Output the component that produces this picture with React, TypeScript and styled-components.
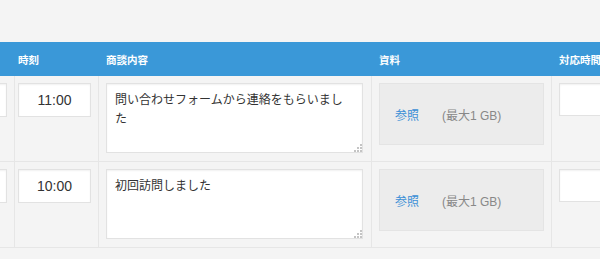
import React from "react";
import styled, { createGlobalStyle } from "styled-components";

const GlobalStyle = createGlobalStyle`
  html, body {
    margin: 0;
    padding: 0;
    background: #f4f4f4;
    overflow: hidden;
  }
  body {
    font-family: "Liberation Sans", "Noto Sans CJK JP", sans-serif;
  }
`;

// 列幅は全行で共通
const COLUMNS = "11px 88px 273px 180px 160px";

type Visit = {
  time: string;
  memo: string;
};

const visits: Visit[] = [
  { time: "11:00", memo: "問い合わせフォームから連絡をもらいました" },
  { time: "10:00", memo: "初回訪問しました" },
];

const App: React.FC = () => {
  return (
    <Page>
      <GlobalStyle />
      <Table>
        <HeaderRow>
          <HeaderCell />
          <HeaderCell>時刻</HeaderCell>
          <HeaderCell>商談内容</HeaderCell>
          <HeaderCell>資料</HeaderCell>
          <HeaderCell>対応時間</HeaderCell>
        </HeaderRow>
        {visits.map((v) => (
          <Row key={v.time}>
            <Cell $align="end">
              <TimeInput readOnly value="" />
            </Cell>
            <Cell>
              <TimeInput readOnly value={v.time} />
            </Cell>
            <Cell>
              <MemoWrap>
                <Memo readOnly value={v.memo} />
                <Grip width="9" height="9" viewBox="0 0 9 9">
                  <rect x="7" y="1" width="2" height="2" fill="#c4c4c4" />
                  <rect x="4" y="4" width="2" height="2" fill="#c4c4c4" />
                  <rect x="7" y="4" width="2" height="2" fill="#c4c4c4" />
                  <rect x="1" y="7" width="2" height="2" fill="#c4c4c4" />
                  <rect x="4" y="7" width="2" height="2" fill="#c4c4c4" />
                  <rect x="7" y="7" width="2" height="2" fill="#c4c4c4" />
                </Grip>
              </MemoWrap>
            </Cell>
            <Cell>
              <FileBox>
                <FileLink>参照</FileLink>
                <FileLimit>(最大1 GB)</FileLimit>
              </FileBox>
            </Cell>
            <Cell>
              <DurationInput readOnly value="" />
            </Cell>
          </Row>
        ))}
      </Table>
    </Page>
  );
};

export default App;

const Page = styled.div`
  padding-top: 42px;
  width: 600px;
  overflow: hidden;
`;

const Table = styled.div`
  width: 712px;
`;

const HeaderRow = styled.div`
  display: grid;
  grid-template-columns: ${COLUMNS};
  height: 34px;
  align-items: center;
  background: #3a98d8;
`;

const HeaderCell = styled.div`
  padding-left: 7px;
  color: #ffffff;
  font-size: 10.5px;
  font-weight: 700;
  white-space: nowrap;
  overflow: hidden;
`;

const Row = styled.div`
  display: grid;
  grid-template-columns: ${COLUMNS};
  border-bottom: 1px solid #e6e6e6;
`;

const Cell = styled.div<{ $align?: "end" }>`
  display: flex;
  align-items: flex-start;
  justify-content: ${(p) => (p.$align === "end" ? "flex-end" : "flex-start")};
  padding: 7px 7px 8px;
  border-right: 1px solid #e6e6e6;
  overflow: hidden;
`;

const TimeInput = styled.input`
  flex: none;
  box-sizing: border-box;
  width: 73px;
  height: 34px;
  margin: 0;
  padding: 0;
  border: 1px solid #e2e2e2;
  background: #ffffff;
  box-shadow: inset 0 1px 2px rgba(0, 0, 0, 0.06);
  font-family: inherit;
  font-size: 14px;
  color: #333333;
  text-align: center;
  outline: none;
`;

const MemoWrap = styled.div`
  position: relative;
  width: 257px;
  height: 70px;
`;

const Memo = styled.textarea`
  box-sizing: border-box;
  display: block;
  width: 100%;
  height: 100%;
  margin: 0;
  padding: 7px 18px 7px 8px;
  border: 1px solid #e2e2e2;
  background: #ffffff;
  box-shadow: inset 0 1px 2px rgba(0, 0, 0, 0.06);
  font-family: inherit;
  font-size: 12px;
  line-height: 19px;
  color: #333333;
  resize: none;
  outline: none;
`;

const Grip = styled.svg`
  position: absolute;
  right: 1px;
  bottom: 1px;
`;

const FileBox = styled.div`
  box-sizing: border-box;
  display: flex;
  align-items: center;
  gap: 23px;
  width: 165px;
  height: 62px;
  padding-left: 15px;
  border: 1px solid #e4e4e4;
  background: #ececec;
  font-size: 12px;
`;

const FileLink = styled.span`
  color: #3b8fd6;
  cursor: pointer;
`;

const FileLimit = styled.span`
  color: #888888;
`;

const DurationInput = styled(TimeInput)`
  width: 120px;
  height: 33px;
`;
